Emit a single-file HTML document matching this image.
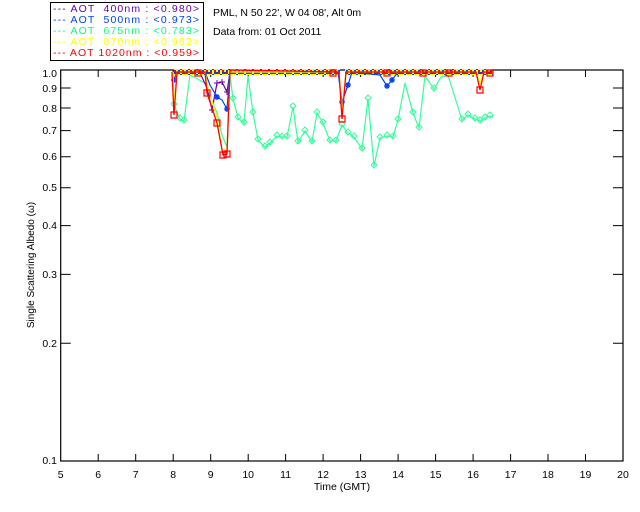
<!DOCTYPE html>
<html><head><meta charset="utf-8"><style>
html,body{margin:0;padding:0;background:#fff;}
svg{display:block;font-family:"Liberation Sans",sans-serif;}
</style></head><body>
<svg width="640" height="512" viewBox="0 0 640 512" xmlns="http://www.w3.org/2000/svg">
<defs>
<pattern id="band" width="8" height="6" patternUnits="userSpaceOnUse">
<rect width="8" height="6" fill="#ffff00"/>
<rect x="0" y="0" width="2" height="2" fill="#0040ff"/>
<rect x="4" y="2" width="2" height="2" fill="#0040ff"/>
<rect x="2" y="4" width="2" height="2" fill="#0040ff"/>
<rect x="6" y="0" width="2" height="2" fill="#0040ff"/>
<rect x="2" y="0" width="2" height="2" fill="#ff0000"/>
<rect x="6" y="4" width="2" height="2" fill="#ff0000"/>
</pattern>
</defs>
<rect x="50.5" y="2.5" width="153" height="58" fill="none" stroke="#000" stroke-width="1"/>
<g font-size="10.5">
<text x="53" y="12" fill="#6a00b0" textLength="146" lengthAdjust="spacing" xml:space="preserve">--- AOT  400nm : &lt;0.980&gt;</text>
<text x="53" y="23" fill="#0040ff" textLength="146" lengthAdjust="spacing" xml:space="preserve">--- AOT  500nm : &lt;0.973&gt;</text>
<text x="53" y="34" fill="#00ff80" textLength="146" lengthAdjust="spacing" xml:space="preserve">--- AOT  675nm : &lt;0.783&gt;</text>
<text x="53" y="45" fill="#ffff00" textLength="146" lengthAdjust="spacing" xml:space="preserve">--- AOT  870nm : &lt;0.962&gt;</text>
<text x="53" y="56" fill="#ff0000" textLength="146" lengthAdjust="spacing" xml:space="preserve">--- AOT 1020nm : &lt;0.959&gt;</text>
</g>
<text x="213" y="16" font-size="10.5">PML, N 50 22', W 04 08', Alt 0m</text>
<text x="213" y="35" font-size="10.5">Data from: 01 Oct 2011</text>
<rect x="60.7" y="70" width="562.3" height="391" fill="none" stroke="#000" stroke-width="1.2"/>
<g stroke="#000" stroke-width="1">
<path d="M98.2 461v-7M135.7 461v-7M173.2 461v-7M210.7 461v-7M248.2 461v-7M285.6 461v-7M323.1 461v-7M360.6 461v-7M398.1 461v-7M435.6 461v-7M473.1 461v-7M510.6 461v-7M548 461v-7M585.5 461v-7"/>
<path d="M98.2 70v7M135.7 70v7M173.2 70v7M210.7 70v7M248.2 70v7M285.6 70v7M323.1 70v7M360.6 70v7M398.1 70v7M435.6 70v7M473.1 70v7M510.6 70v7M548 70v7M585.5 70v7"/>
<path d="M60.7 88h10M60.7 108h10M60.7 130.6h10M60.7 156.7h10M60.7 187.7h10M60.7 225.6h10M60.7 274.4h10M60.7 343.3h10"/>
<path d="M623 88h-10M623 108h-10M623 130.6h-10M623 156.7h-10M623 187.7h-10M623 225.6h-10M623 274.4h-10M623 343.3h-10"/>
</g>
<g font-size="10.5" text-anchor="end">
<text x="57" y="77">1.0</text><text x="57" y="92">0.9</text><text x="57" y="112">0.8</text>
<text x="57" y="134">0.7</text><text x="57" y="160">0.6</text><text x="57" y="191">0.5</text>
<text x="57" y="229">0.4</text><text x="57" y="278">0.3</text><text x="57" y="347">0.2</text>
<text x="57" y="464">0.1</text>
</g>
<g font-size="10.5" text-anchor="middle">
<text x="60.7" y="478">5</text><text x="98.2" y="478">6</text><text x="135.7" y="478">7</text><text x="173.2" y="478">8</text><text x="210.7" y="478">9</text><text x="248.2" y="478">10</text><text x="285.6" y="478">11</text><text x="323.1" y="478">12</text><text x="360.6" y="478">13</text><text x="398.1" y="478">14</text><text x="435.6" y="478">15</text><text x="473.1" y="478">16</text><text x="510.6" y="478">17</text><text x="548" y="478">18</text><text x="585.5" y="478">19</text><text x="623" y="478">20</text>
<text x="342" y="490">Time (GMT)</text>
</g>
<text transform="translate(34 265) rotate(-90)" font-size="10" text-anchor="middle">Single Scattering Albedo (ω)</text>
<polyline fill="none" stroke="#33ff99" stroke-width="1.2" points="174,105 180,119 184,121 190,75 205,83 217,113 222,135 227,147 230,75 233,99 238,118 244,123 248,76 253,113 258,140 265,147 270,143 277,136 282,137 287,137 293,107 298,142 305,131 312,142 317,113 323,123 330,141 336,141 342,125 348,133 354,137 362,149 368,99 374,166 380,138 387,136 393,137 398,120 405,83 413,113 419,128 425,76 434,89 441,77 448,75 462,120 468,115 475,119 480,121 485,118 490,116 493,117"/>
<g fill="none" stroke="#33ff99" stroke-width="1">
<path d="M174 101l3 3-3 3-3-3zM180 115l3 3-3 3-3-3zM184 117l3 3-3 3-3-3zM233 95l3 3-3 3-3-3zM238 114l3 3-3 3-3-3zM244 119l3 3-3 3-3-3zM253 109l3 3-3 3-3-3zM258 136l3 3-3 3-3-3zM265 143l3 3-3 3-3-3zM270 139l3 3-3 3-3-3zM277 132l3 3-3 3-3-3zM282 133l3 3-3 3-3-3zM287 133l3 3-3 3-3-3zM293 103l3 3-3 3-3-3zM298 138l3 3-3 3-3-3zM305 127l3 3-3 3-3-3zM312 138l3 3-3 3-3-3zM317 109l3 3-3 3-3-3zM323 119l3 3-3 3-3-3zM330 137l3 3-3 3-3-3zM336 137l3 3-3 3-3-3zM342 121l3 3-3 3-3-3zM348 129l3 3-3 3-3-3zM354 133l3 3-3 3-3-3zM362 145l3 3-3 3-3-3zM368 95l3 3-3 3-3-3zM374 162l3 3-3 3-3-3zM380 134l3 3-3 3-3-3zM387 132l3 3-3 3-3-3zM393 133l3 3-3 3-3-3zM398 116l3 3-3 3-3-3zM413 109l3 3-3 3-3-3zM419 124l3 3-3 3-3-3zM434 85l3 3-3 3-3-3zM462 116l3 3-3 3-3-3zM468 111l3 3-3 3-3-3zM475 115l3 3-3 3-3-3zM480 117l3 3-3 3-3-3zM485 114l3 3-3 3-3-3zM490 112l3 3-3 3-3-3z"/>
</g>
<rect x="174" y="69" width="58" height="6" fill="url(#band)"/>
<rect x="232" y="69" width="108" height="6" fill="url(#band)"/>
<rect x="345" y="69" width="148" height="6" fill="url(#band)"/>
<polyline fill="none" stroke="#6a00b0" stroke-width="1.2" points="201,75 207,88 212,110 217,83 222,82 227,92 230,72"/>
<g stroke="#6a00b0" stroke-width="1"><path d="M209 110h6M212 107v6M214 83h6M217 80v6M219 82h6M222 79v6M224 92h6M227 89v6"/></g>
<polyline fill="none" stroke="#0040ff" stroke-width="1.2" points="172,72 174,80 177,72 205,72 210,85 217,97 222,100 227,109 230,72 338,72 342,102 348,85 352,72 380,75 387,86 392,80 398,72"/>
<g stroke="#0040ff" stroke-width="1.3"><path d="M171 80h6M174 77v6M172 78l4 4M176 78l-4 4M214 97h6M217 94v6M215 95l4 4M219 95l-4 4M224 109h6M227 106v6M225 107l4 4M229 107l-4 4M339 102h6M342 99v6M340 100l4 4M344 100l-4 4M345 85h6M348 82v6M346 83l4 4M350 83l-4 4M384 86h6M387 83v6M385 84l4 4M389 84l-4 4M389 80h6M392 77v6M390 78l4 4M394 78l-4 4"/></g>
<polyline fill="none" stroke="#ffff00" stroke-width="1.3" points="173,72 174,106 177,72 205,72 208,88 217,117 222,150 227,150 230,72 339,72 342,112 346,72 476,72 480,83 484,72"/>
<polyline fill="none" stroke="#ff0000" stroke-width="1.3" points="172,72 174,115 177,72 205,72 207,93 217,123 223,155 227,154 230,70 339,72 342,119 346,72 476,72 480,90 484,72 493,72"/>
<g fill="none" stroke="#ff0000" stroke-width="1.2"><path d="M171 112h6v6h-6zM204 90h6v6h-6zM214 120h6v6h-6zM220 152h6v6h-6zM224 151h6v6h-6zM339 116h6v6h-6zM477 87h6v6h-6zM195 70h6v6h-6zM330 70h6v6h-6zM384 70h6v6h-6zM420 70h6v6h-6zM446 70h6v6h-6zM487 70h6v6h-6z"/></g>
</svg>
</body></html>
